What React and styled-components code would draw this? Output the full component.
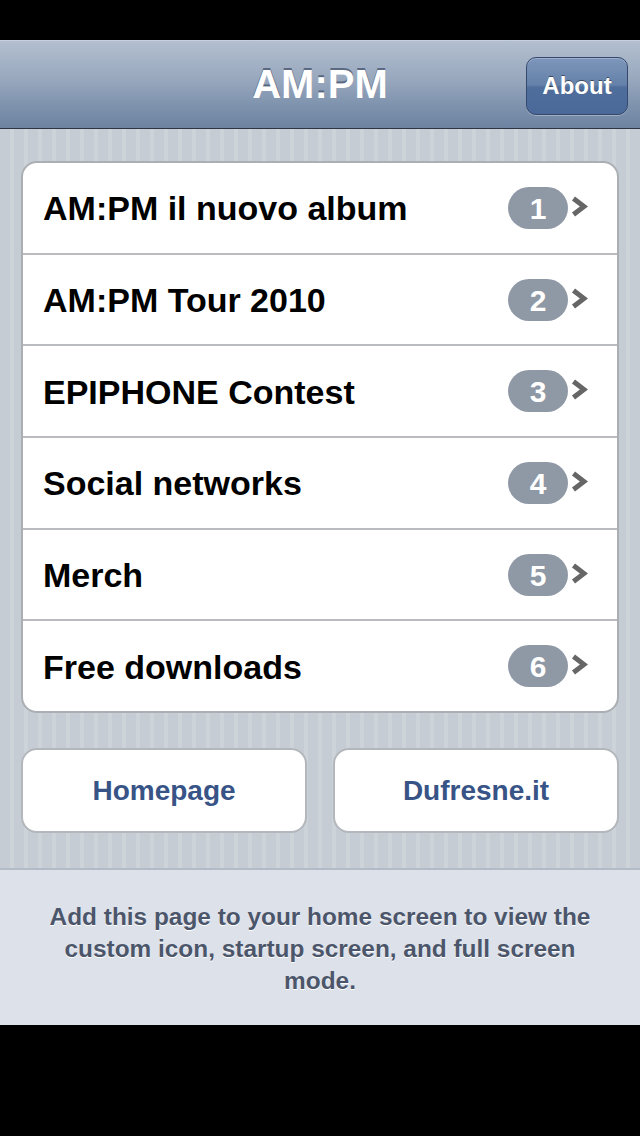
import React from 'react';
import styled, { createGlobalStyle } from 'styled-components';

const FONT = '"Liberation Sans", Arial, Helvetica, sans-serif';

const GlobalStyle = createGlobalStyle`
  html, body {
    margin: 0;
    padding: 0;
    background: #000;
    font-family: ${FONT};
  }
`;

const Screen = styled.div`
  width: 640px;
  height: 1136px;
  display: flex;
  flex-direction: column;
  background: #000;
  overflow: hidden;
`;

const StatusBar = styled.div`
  height: 40px;
  flex: 0 0 auto;
  background: #000;
`;

const NavBar = styled.header`
  height: 89px;
  flex: 0 0 auto;
  box-sizing: border-box;
  display: grid;
  grid-template-columns: 1fr auto 1fr;
  align-items: center;
  padding: 0 12px;
  background: linear-gradient(to bottom, #b3bfcf 0%, #97a7bd 45%, #7e92ad 75%, #6c83a1 100%);
  border-top: 1px solid #c6d0dc;
  border-bottom: 1px solid #2d3642;
`;

const Title = styled.h1`
  grid-column: 2;
  margin: 0;
  color: #fff;
  font-size: 40px;
  font-weight: bold;
  text-shadow: 0 -2px 0 rgba(60, 75, 100, 0.7);
`;

const NavButton = styled.button`
  grid-column: 3;
  justify-self: end;
  width: 102px;
  height: 58px;
  margin-top: 2px;
  border-radius: 10px;
  border: 1px solid #34496d;
  background: linear-gradient(to bottom, #7d96ba 0%, #6581a9 48%, #4f6e9c 52%, #4a6999 100%);
  box-shadow: inset 0 1px 0 rgba(255, 255, 255, 0.25), 0 1px 0 rgba(255, 255, 255, 0.3);
  color: #fff;
  font-family: ${FONT};
  font-size: 24px;
  font-weight: bold;
  text-shadow: 0 -1px 0 rgba(0, 0, 0, 0.45);
  padding: 0;
`;

const Content = styled.main`
  flex: 0 0 auto;
  height: 739px;
  box-sizing: border-box;
  padding: 32px 21px 0;
  display: flex;
  flex-direction: column;
  gap: 35px;
  background-color: #c5ccd4;
  background-image: repeating-linear-gradient(
    90deg,
    #c5ccd4 0px,
    #c5ccd4 10px,
    #ccd3d9 10px,
    #ccd3d9 14px
  );
`;

const List = styled.ul`
  list-style: none;
  margin: 0;
  padding: 0;
  height: 552px;
  box-sizing: border-box;
  display: flex;
  flex-direction: column;
  background: #fff;
  border: 2px solid #abafb4;
  border-radius: 16px;
  overflow: hidden;
`;

const Row = styled.li`
  flex: 1 1 0;
  display: flex;
  align-items: center;
  padding: 0 29px 0 20px;
  border-top: ${p => (p.$first ? 'none' : '2px solid #b9bbbe')};
`;

const RowLabel = styled.span`
  flex: 1;
  font-size: 34px;
  font-weight: bold;
  color: #000;
  padding-top: 2px;
`;

const Badge = styled.span`
  width: 60px;
  height: 42px;
  border-radius: 21px;
  background: #8f98a5;
  color: #fff;
  font-size: 30px;
  font-weight: bold;
  display: flex;
  align-items: center;
  justify-content: center;
  padding-top: 2px;
  box-sizing: border-box;
`;

const Chevron = styled.svg`
  width: 17px;
  height: 22px;
  margin-left: 3px;
  margin-top: -2px;
  filter: blur(0.4px);
`;

const ButtonRow = styled.div`
  display: grid;
  grid-template-columns: 1fr 1fr;
  gap: 26px;
`;

const LinkButton = styled.a`
  height: 85px;
  box-sizing: border-box;
  display: flex;
  align-items: center;
  justify-content: center;
  background: #fff;
  border: 2px solid #b3b7bc;
  border-radius: 16px;
  color: #385487;
  font-size: 28px;
  font-weight: bold;
  text-decoration: none;
`;

const Footer = styled.footer`
  height: 157px;
  flex: 0 0 auto;
  box-sizing: border-box;
  background: #dde1ea;
  border-top: 2px solid #b3bbc6;
  padding: 31px 40px 0;
  text-align: center;
  color: #4c566b;
  font-size: 24.4px;
  font-weight: bold;
  line-height: 32px;
  text-shadow: 0 1px 0 #fff;
`;

const items = [
  'AM:PM il nuovo album',
  'AM:PM Tour 2010',
  'EPIPHONE Contest',
  'Social networks',
  'Merch',
  'Free downloads',
];

function ChevronIcon() {
  return (
    <Chevron viewBox="0 0 17 22">
      <polyline points="2.5,2.5 13,10.5 2.5,18.5" fill="none" stroke="#666" strokeWidth="5" strokeLinejoin="miter" />
    </Chevron>
  );
}

export default function App() {
  return (
    <Screen>
      <GlobalStyle />
      <StatusBar />
      <NavBar>
        <Title>AM:PM</Title>
        <NavButton>About</NavButton>
      </NavBar>
      <Content>
        <List>
          {items.map((label, i) => (
            <Row key={label} $first={i === 0}>
              <RowLabel>{label}</RowLabel>
              <Badge>{i + 1}</Badge>
              <ChevronIcon />
            </Row>
          ))}
        </List>
        <ButtonRow>
          <LinkButton href="#">Homepage</LinkButton>
          <LinkButton href="#">Dufresne.it</LinkButton>
        </ButtonRow>
      </Content>
      <Footer>
        Add this page to your home screen to view the custom icon, startup screen, and full screen mode.
      </Footer>
    </Screen>
  );
}
